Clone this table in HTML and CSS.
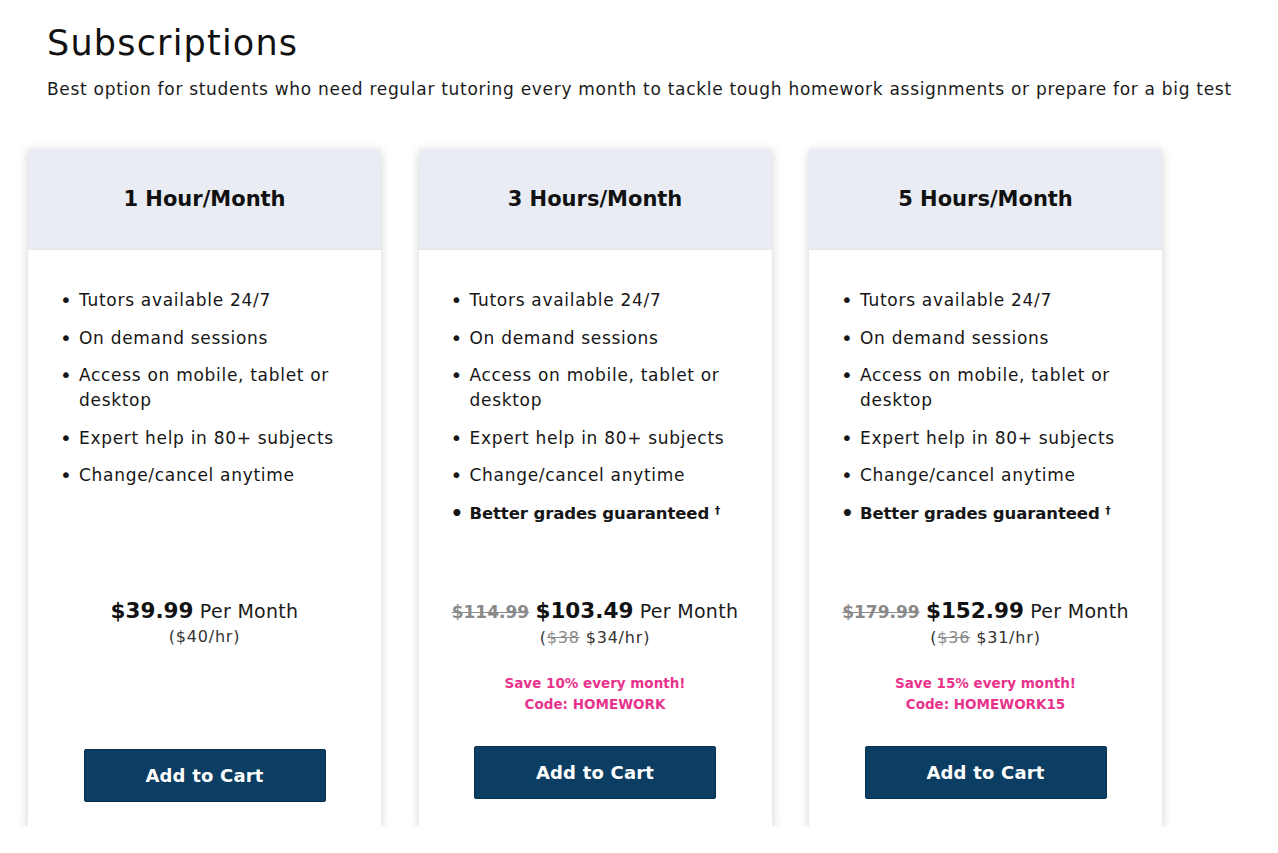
FILE: index.html
```html
<!DOCTYPE html>
<html lang="en">
<head>
<meta charset="utf-8">
<title>Subscriptions</title>
<link rel="stylesheet" href="styles.css">
</head>
<body>
<main class="page">
  <h1 class="title">Subscriptions</h1>
  <p class="subtitle">Best option for students who need regular tutoring every month to tackle tough homework assignments or prepare for a big test</p>

  <section class="plans">
    <article class="plan">
      <header class="plan-head"><h2>1 Hour/Month</h2></header>
      <div class="plan-body">
        <ul class="features">
          <li>Tutors available 24/7</li>
          <li>On demand sessions</li>
          <li>Access on mobile, tablet or desktop</li>
          <li>Expert help in 80+ subjects</li>
          <li>Change/cancel anytime</li>
        </ul>
        <div class="price">
          <div class="price-main"><b>$39.99</b> Per Month</div>
          <div class="price-hr">($40/hr)</div>
        </div>
        <button class="cart cart-low">Add to Cart</button>
      </div>
    </article>

    <article class="plan">
      <header class="plan-head"><h2>3 Hours/Month</h2></header>
      <div class="plan-body">
        <ul class="features">
          <li>Tutors available 24/7</li>
          <li>On demand sessions</li>
          <li>Access on mobile, tablet or desktop</li>
          <li>Expert help in 80+ subjects</li>
          <li>Change/cancel anytime</li>
          <li class="strong"><span>Better grades guaranteed <sup>†</sup></span></li>
        </ul>
        <div class="price">
          <div class="price-main"><s>$114.99</s> <b>$103.49</b> Per Month</div>
          <div class="price-hr">(<s>$38</s> $34/hr)</div>
        </div>
        <p class="promo">Save 10% every month!<br>Code: HOMEWORK</p>
        <button class="cart">Add to Cart</button>
      </div>
    </article>

    <article class="plan">
      <header class="plan-head"><h2>5 Hours/Month</h2></header>
      <div class="plan-body">
        <ul class="features">
          <li>Tutors available 24/7</li>
          <li>On demand sessions</li>
          <li>Access on mobile, tablet or desktop</li>
          <li>Expert help in 80+ subjects</li>
          <li>Change/cancel anytime</li>
          <li class="strong"><span>Better grades guaranteed <sup>†</sup></span></li>
        </ul>
        <div class="price">
          <div class="price-main"><s>$179.99</s> <b>$152.99</b> Per Month</div>
          <div class="price-hr">(<s>$36</s> $31/hr)</div>
        </div>
        <p class="promo">Save 15% every month!<br>Code: HOMEWORK15</p>
        <button class="cart">Add to Cart</button>
      </div>
    </article>
  </section>
</main>
</body>
</html>
```

FILE: styles.css
```css
* { box-sizing: border-box; }

html, body {
  margin: 0;
  padding: 0;
  background: #ffffff;
}

body {
  font-family: "DejaVu Sans", "Noto Sans", sans-serif;
  color: #1b1b1b;
}

.page {
  padding: 21px 0 0 0;
}

.title {
  margin: 0 0 0 47px;
  font-size: 35px;
  font-weight: 400;
  line-height: 44px;
  letter-spacing: 1.2px;
  color: #111;
}

.subtitle {
  margin: 12px 0 0 47px;
  font-size: 17px;
  line-height: 24px;
  letter-spacing: 0.7px;
  color: #1b1b1b;
  white-space: nowrap;
}

.plans {
  display: flex;
  gap: 37.5px;
  margin: 48px 0 0 28px;
}

.plan {
  width: 353px;
  height: 678px;
  display: flex;
  flex-direction: column;
  background: #fff;
  box-shadow: 0 2px 10px rgba(0, 0, 0, 0.18);
}

.plan-head {
  height: 101px;
  flex: none;
  display: flex;
  align-items: center;
  justify-content: center;
  background: #e9edf3;
  border-bottom: 1px solid #e2e5ea;
}

.plan-head h2 {
  margin: 0;
  font-size: 21px;
  font-weight: 700;
  color: #111;
}

.plan-body {
  flex: 1;
  display: flex;
  flex-direction: column;
  align-items: center;
  padding: 38px 20px 28px 20px;
}

.features {
  align-self: stretch;
  margin: 0;
  padding: 0 0 0 12px;
  height: 262px;
  list-style: none;
  font-size: 17px;
  line-height: 25px;
  letter-spacing: 0.7px;
  color: #161616;
}

.features li {
  display: flex;
  margin-bottom: 12.5px;
}

.features li::before {
  content: "•";
  flex: none;
  width: 19px;
  font-size: 20px;
  letter-spacing: 0;
}

.features .strong {
  font-weight: 700;
  font-size: 16.5px;
  letter-spacing: -0.1px;
}

.features sup {
  font-size: 11px;
  vertical-align: 5px;
  line-height: 0;
}

.price {
  margin-top: 48px;
  text-align: center;
}

.price-main {
  font-size: 19px;
  line-height: 26px;
  letter-spacing: 0.3px;
  white-space: nowrap;
}

.price-main b {
  font-size: 21.5px;
  font-weight: 700;
  letter-spacing: 0;
  color: #111;
}

.price-main s {
  font-size: 17px;
  font-weight: 700;
  letter-spacing: 0;
  color: #8a8a8a;
}

.price-hr {
  font-size: 16px;
  line-height: 26px;
  letter-spacing: 0.8px;
  color: #333;
}

.price-hr s {
  color: #8a8a8a;
}

.promo {
  margin: 22px 0 0 0;
  text-align: center;
  font-size: 13.5px;
  font-weight: 700;
  line-height: 21px;
  color: #e8338c;
}

.cart {
  margin-top: auto;
  width: 242px;
  height: 53px;
  border: 1px solid #06304d;
  border-radius: 2px;
  background: #0b3e62;
  color: #fff;
  font-family: inherit;
  font-size: 18px;
  font-weight: 700;
  letter-spacing: 0.2px;
  cursor: pointer;
}

.cart-low {
  margin-bottom: -3px;
}
```
